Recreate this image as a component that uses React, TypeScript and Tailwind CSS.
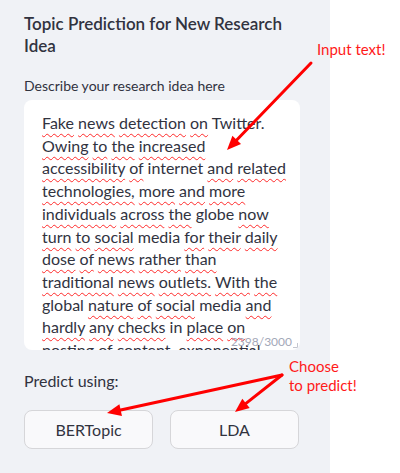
import React from "react";

// "*" marks a word the spell checker left alone
const lines = [
	"Fake news detection on *Twitter.",
	"Owing to the increased",
	"accessibility of *internet and related",
	"technologies, more and more",
	"individuals across the *globe now",
	"turn to social *media for their daily",
	"dose of news rather than",
	"traditional news outlets. With the",
	"*global nature of social *media and",
	"hardly any checks *in place on",
	"posting of content, exponential",
];

function Word({ text }: { text: string }) {
	if (text.startsWith("*")) return <span>{text.slice(1)}</span>;
	return (
		<span className="underline decoration-wavy decoration-[#ff2a2a] decoration-1 underline-offset-[4px]">
			{text}
		</span>
	);
}

function Arrow({ x1, y1, x2, y2 }: { x1: number; y1: number; x2: number; y2: number }) {
	const a = Math.atan2(y2 - y1, x2 - x1);
	const len = 14;
	const w = 6;
	const bx = x2 - len * Math.cos(a);
	const by = y2 - len * Math.sin(a);
	const p1 = `${bx + w * Math.sin(a)},${by - w * Math.cos(a)}`;
	const p2 = `${bx - w * Math.sin(a)},${by + w * Math.cos(a)}`;
	return (
		<g>
			<line x1={x1} y1={y1} x2={bx} y2={by} stroke="#ff0000" strokeWidth="3" strokeLinecap="round" />
			<polygon points={`${x2},${y2} ${p1} ${p2}`} fill="#ff0000" />
		</g>
	);
}

export default function App() {
	return (
		<div
			className="relative flex h-[473px] w-[400px] overflow-hidden bg-white text-[#31333f]"
			style={{ fontFamily: "Lato, 'Open Sans', sans-serif" }}
		>
			<div className="flex w-[330px] flex-col bg-[#f0f2f6] px-6 pt-[13px]">
				<h2 className="text-[17px] font-semibold leading-[22px]">
					Topic Prediction for New Research Idea
				</h2>
				<label className="mt-[20px] text-[14px] leading-[18px]">
					Describe your research idea here
				</label>
				<div className="relative mt-[5px] h-[250px] w-[276px] overflow-hidden rounded-lg bg-white pl-[18px] pt-[12px]">
					<div className="text-[16px] leading-[22.7px]">
						{lines.map((line, i) => (
							<div key={i} className="whitespace-nowrap">
								{line.split(" ").map((w, j) => (
									<React.Fragment key={j}>
										{j > 0 && " "}
										<Word text={w} />
									</React.Fragment>
								))}
							</div>
						))}
					</div>
					<span className="absolute bottom-[1px] right-[8px] text-[12px] leading-[14px] text-[#a3a8b8]">
						2398/3000
					</span>
					<svg className="absolute bottom-[2px] right-[2px]" width="5" height="5" viewBox="0 0 5 5">
						<path d="M0 4.5 H4.5 V0" fill="none" stroke="#c4c6cf" strokeWidth="1" />
					</svg>
				</div>
				<p className="mt-[21px] text-[16px] leading-[20px]">Predict using:</p>
				<div className="mt-[19px] flex gap-[17px]">
					<button className="h-[39px] w-[129px] rounded-lg border border-[#d6d6d9] bg-[#f9f9fb] text-[16px]">
						BERTopic
					</button>
					<button className="h-[39px] w-[129px] rounded-lg border border-[#d6d6d9] bg-[#f9f9fb] text-[16px]">
						LDA
					</button>
				</div>
			</div>

			<span className="absolute left-[317px] top-[40px] text-[15px] leading-[18px] text-[#ff1a1a]">
				Input text!
			</span>
			<span className="absolute left-[289px] top-[357px] text-[15px] leading-[19px] text-[#ff1a1a]">
				Choose
				<br />
				to predict!
			</span>
			<svg className="pointer-events-none absolute inset-0" width="400" height="473">
				<Arrow x1={311} y1={63} x2={227} y2={150} />
				<Arrow x1={282} y1={375} x2={235} y2={412} />
				<Arrow x1={282} y1={375} x2={107} y2={413} />
			</svg>
		</div>
	);
}
